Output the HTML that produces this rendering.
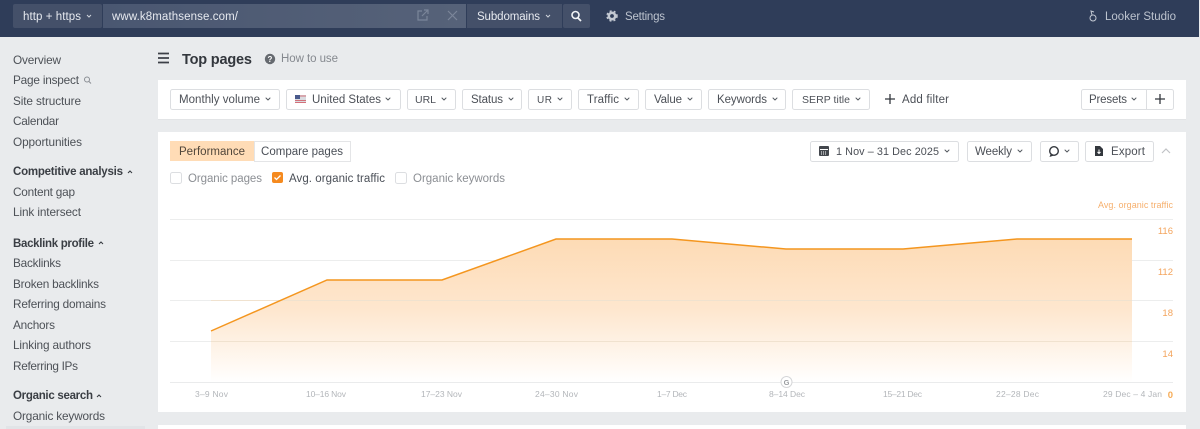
<!DOCTYPE html>
<html><head><meta charset="utf-8"><style>
html,body{margin:0;padding:0;background:#e9ebed;width:1200px;height:429px;overflow:hidden}
svg{display:block;filter:blur(.3px)}
text{font-family:"Liberation Sans",sans-serif;font-size:12px;fill:#4a4f57}
.s text{fill:#4d5157;font-size:11.8px}
.s .b{font-weight:bold;fill:#3a3e44;font-size:11.5px}
.w{fill:#e6e9ef;font-size:11.5px}
.btn{fill:#fff;stroke:#dcdee1}
.f{fill:#4c5057;font-size:11.5px}
.ch{fill:none;stroke:#555a61;stroke-width:1;stroke-linecap:round;stroke-linejoin:round}
.x{fill:#b3b6ba;font-size:8.5px}
.y{fill:#f3a45c;font-size:9.5px}
.g{stroke:#eceded;stroke-width:1}
</style></head><body>
<svg width="1200" height="429" viewBox="0 0 1200 429" xmlns="http://www.w3.org/2000/svg">
<defs>
<linearGradient id="a" gradientUnits="userSpaceOnUse" x1="0" y1="239" x2="0" y2="382"><stop offset="0" stop-color="#fddbb5"/><stop offset=".5" stop-color="#fee7cf"/><stop offset="1" stop-color="#fff" /></linearGradient>
<linearGradient id="u" x1="0" x2="1" y1="0" y2="0"><stop offset="0" stop-color="#4a5771"/><stop offset="1" stop-color="#566279"/></linearGradient>
</defs>
<rect width="1200" height="429" fill="#e9ebed"/>
<!-- header -->
<rect width="1199" height="37" fill="#2f3d59"/>
<rect x="13" y="4" width="89" height="24" rx="2" fill="#445069"/>
<rect x="103" y="4" width="363" height="24" fill="url(#u)"/>
<rect x="467" y="4" width="95" height="24" fill="#445069"/>
<rect x="563" y="4" width="27" height="24" rx="2" fill="#445069"/>
<text class="w" x="23" y="20" textLength="58">http + https</text>
<path d="M87 15l2 2 2-2" fill="none" stroke="#cfd4dc"/>
<text class="w" x="112" y="20" textLength="126">www.k8mathsense.com/</text>
<path d="M422 11h-4v9h9v-4M422 16l6-6M424 10h4v4" fill="none" stroke="#7b869a" stroke-width="1.2"/>
<path d="M448 11l9 9M457 11l-9 9" stroke="#7b869a" stroke-width="1.2"/>
<text class="w" x="477" y="20" textLength="63">Subdomains</text>
<path d="M546 15l2 2 2-2" fill="none" stroke="#cfd4dc"/>
<circle cx="575.500" cy="15" r="3.500" fill="none" stroke="#f1f3f6" stroke-width="1.600"/><path d="M578 18l3 3" stroke="#f1f3f6" stroke-width="1.800"/>
<circle cx="612" cy="16" r="3.200" fill="none" stroke="#c3c9d3" stroke-width="2.600"/><circle cx="612" cy="16" r="5" fill="none" stroke="#c3c9d3" stroke-width="1.500" stroke-dasharray="2 2.200"/>
<text x="625" y="20" textLength="40" style="fill:#bcc3ce;font-size:11.5px">Settings</text>
<circle cx="1093" cy="18" r="3" fill="none" stroke="#c3c9d3"/><path d="M1092 15l-1-4 3 1" fill="none" stroke="#c3c9d3"/>
<text x="1105" y="20" textLength="71" style="fill:#bcc3ce;font-size:11.5px">Looker Studio</text>
<!-- sidebar -->
<g class="s">
<text x="13" y="64" textLength="48">Overview</text>
<text x="13" y="84" textLength="66">Page inspect</text>
<circle cx="87" cy="79.500" r="2.500" fill="none" stroke="#8a8e94"/><path d="M89 81.500l2 2" stroke="#8a8e94"/>
<text x="13" y="105" textLength="68">Site structure</text>
<text x="13" y="125" textLength="46">Calendar</text>
<text x="13" y="146" textLength="69">Opportunities</text>
<text class="b" x="13" y="175" textLength="110">Competitive analysis</text>
<path d="M128 173l2-2 2 2" fill="none" stroke="#33373d"/>
<text x="13" y="196" textLength="62">Content gap</text>
<text x="13" y="216" textLength="68">Link intersect</text>
<text class="b" x="13" y="247" textLength="81">Backlink profile</text>
<path d="M99 244l2-2 2 2" fill="none" stroke="#33373d"/>
<text x="13" y="267" textLength="48">Backlinks</text>
<text x="13" y="288" textLength="86">Broken backlinks</text>
<text x="13" y="308" textLength="93">Referring domains</text>
<text x="13" y="329" textLength="42">Anchors</text>
<text x="13" y="349" textLength="78">Linking authors</text>
<text x="13" y="370" textLength="65">Referring IPs</text>
<text class="b" x="13" y="399" textLength="80">Organic search</text>
<path d="M97 397l2-2 2 2" fill="none" stroke="#33373d"/>
<text x="13" y="420" textLength="92">Organic keywords</text>
<rect x="6" y="426" width="139" height="3" fill="#e1e4e7"/>
</g>
<!-- title -->
<path d="M158 53.500h11M158 58h11M158 62.500h11" stroke="#3c4047" stroke-width="1.700"/>
<text x="182" y="64" textLength="70" style="font-weight:bold;font-size:14.500px;fill:#33373d">Top pages</text>
<circle cx="270" cy="59" r="5.200" fill="#666a70"/>
<text x="270" y="62" text-anchor="middle" style="fill:#fff;font-size:8px;font-weight:bold">?</text>
<text x="281" y="62" textLength="57" style="fill:#85898f;font-size:11.5px">How to use</text>
<!-- filter panel -->
<rect x="158" y="80" width="1028" height="39" fill="#fff"/>
<rect x="158" y="119" width="1028" height="1" fill="#e2e4e6"/>
<rect class="btn" x="170.500" y="89.500" width="109" height="20" rx="2"/>
<text class="f" x="179" y="103" textLength="81">Monthly volume</text>
<path class="ch" d="M266 98l2 2 2-2"/>
<rect class="btn" x="286.500" y="89.500" width="114" height="20" rx="2"/>
<rect x="295" y="95" width="11" height="8" fill="#d9dbe0"/><rect x="295" y="95" width="5" height="4" fill="#4a5a8c"/><path d="M300 96h6M295 100.500h11M295 102.500h11" stroke="#d2717a"/>
<text class="f" x="312" y="103" textLength="69">United States</text>
<path class="ch" d="M386 98l2 2 2-2"/>
<rect class="btn" x="407.500" y="89.500" width="48" height="20" rx="2"/>
<text class="f" x="415" y="103" textLength="21" style="font-size:10.500px">URL</text>
<path class="ch" d="M442 98l2 2 2-2"/>
<rect class="btn" x="462.500" y="89.500" width="59" height="20" rx="2"/>
<text class="f" x="471" y="103" textLength="32">Status</text>
<path class="ch" d="M509 98l2 2 2-2"/>
<rect class="btn" x="528.500" y="89.500" width="43" height="20" rx="2"/>
<text class="f" x="537" y="103" textLength="15" style="font-size:10px">UR</text>
<path class="ch" d="M558 98l2 2 2-2"/>
<rect class="btn" x="578.500" y="89.500" width="60" height="20" rx="2"/>
<text class="f" x="587" y="103" textLength="32">Traffic</text>
<path class="ch" d="M625 98l2 2 2-2"/>
<rect class="btn" x="645.500" y="89.500" width="56" height="20" rx="2"/>
<text class="f" x="654" y="103" textLength="28">Value</text>
<path class="ch" d="M688 98l2 2 2-2"/>
<rect class="btn" x="708.500" y="89.500" width="77" height="20" rx="2"/>
<text class="f" x="717" y="103" textLength="50">Keywords</text>
<path class="ch" d="M773 98l2 2 2-2"/>
<rect class="btn" x="792.500" y="89.500" width="77" height="20" rx="2"/>
<text class="f" x="802" y="103" textLength="48" style="font-size:10.500px">SERP title</text>
<path class="ch" d="M856 98l2 2 2-2"/>
<path d="M885 99h10M890 94v10" stroke="#33373d" stroke-width="1.300"/>
<text class="f" x="902" y="103" textLength="47">Add filter</text>
<rect class="btn" x="1081.500" y="89.500" width="92" height="20" rx="2"/>
<path d="M1146.500 90v19" stroke="#dcdee1"/>
<text class="f" x="1089" y="103" textLength="38">Presets</text>
<path class="ch" d="M1132 98l2 2 2-2"/>
<path d="M1155 99h10M1160 94v10" stroke="#33373d" stroke-width="1.300"/>
<!-- chart panel -->
<rect x="158" y="132" width="1028" height="280" fill="#fff"/>
<rect x="170" y="141" width="84" height="20" fill="#ffdcb6"/>
<rect x="254.500" y="141.500" width="96" height="20" fill="#fff" stroke="#e4e5e7"/>
<text x="179" y="155" textLength="66" style="fill:#50463a;font-size:11.5px">Performance</text>
<text x="261" y="155" textLength="82" style="font-size:11.5px">Compare pages</text>
<rect class="btn" x="170.500" y="172.500" width="11" height="11" rx="2"/>
<text x="188" y="182" textLength="74" style="fill:#8c8f94;font-size:11.5px">Organic pages</text>
<rect x="272" y="172" width="11" height="11" rx="2" fill="#f58a1f"/>
<path d="M274.500 177.500l2 2 4-4" fill="none" stroke="#fff" stroke-width="1.300"/>
<text x="289" y="182" textLength="96" style="font-size:11.5px">Avg. organic traffic</text>
<rect class="btn" x="395.500" y="172.500" width="11" height="11" rx="2"/>
<text x="413" y="182" textLength="92" style="fill:#8c8f94;font-size:11.5px">Organic keywords</text>
<rect class="btn" x="810.500" y="141.500" width="148" height="20" rx="2"/>
<rect x="819" y="146" width="10" height="10" rx="1" fill="#43474d"/><path d="M820 149.500h8" stroke="#fff"/><path d="M821 152h6M821 154h6" stroke="#fff" stroke-dasharray="1 1"/>
<text class="f" x="836" y="155" textLength="103" style="font-size:10.800px">1 Nov – 31 Dec 2025</text>
<path class="ch" d="M945 150l2 2 2-2"/>
<rect class="btn" x="967.500" y="141.500" width="64" height="20" rx="2"/>
<text class="f" x="975" y="155" textLength="37">Weekly</text>
<path class="ch" d="M1018 150l2 2 2-2"/>
<rect class="btn" x="1040.500" y="141.500" width="38" height="20" rx="2"/>
<circle cx="1054" cy="151" r="4.300" fill="none" stroke="#33373d" stroke-width="1.400"/><path d="M1051 154l-1 2.500 3-1" fill="#33373d" stroke="#33373d" stroke-width=".6"/>
<path class="ch" d="M1065 150l2 2 2-2"/>
<rect class="btn" x="1085.500" y="141.500" width="68" height="20" rx="2"/>
<path d="M1095 146h5l3 3v7h-8z" fill="#33373d"/><path d="M1099 149.500v4M1097.500 152l1.500 1.500 1.500-1.500" fill="none" stroke="#fff"/>
<text class="f" x="1111" y="155" textLength="34">Export</text>
<path d="M1162 153l4-4 4 4" fill="none" stroke="#c1c3c6" stroke-width="1.200"/>
<text x="1173" y="208" text-anchor="end" textLength="75" style="fill:#f6b06e;font-size:9px">Avg. organic traffic</text>
<!-- grid -->
<path class="g" d="M170 219.500h1003M170 260.500h1003M170 300.500h1003M170 341.500h1003"/>
<path d="M170 382.500h1003" stroke="#eaebec"/>
<path d="M211 331L327 280H442L556 239H672L786 249H903L1017 239H1132V382H211Z" fill="url(#a)"/>
<path d="M211 300.500H1132M211 341.500H1132" stroke="#f0e2cf"/>
<path d="M211 331L327 280H442L556 239H672L786 249H903L1017 239H1132" fill="none" stroke="#f4961f" stroke-width="1.500"/>
<text class="y" x="1173" y="234" text-anchor="end">116</text>
<text class="y" x="1173" y="275" text-anchor="end">112</text>
<text class="y" x="1173" y="316" text-anchor="end">18</text>
<text class="y" x="1173" y="357" text-anchor="end">14</text>
<text class="y" x="1173" y="398" text-anchor="end" style="font-weight:bold;fill:#f6ab55">0</text>
<circle cx="786.500" cy="382" r="5.500" fill="#fff" stroke="#d5d6d8"/>
<text x="786.500" y="385" text-anchor="middle" style="font-size:7.500px;font-weight:bold;fill:#9a9da1">G</text>
<text class="x" x="195" y="397" textLength="33">3–9 Nov</text>
<text class="x" x="306" y="397" textLength="40">10–16 Nov</text>
<text class="x" x="421" y="397" textLength="41">17–23 Nov</text>
<text class="x" x="535" y="397" textLength="43">24–30 Nov</text>
<text class="x" x="657" y="397" textLength="30">1–7 Dec</text>
<text class="x" x="769" y="397" textLength="36">8–14 Dec</text>
<text class="x" x="883" y="397" textLength="39">15–21 Dec</text>
<text class="x" x="996" y="397" textLength="43">22–28 Dec</text>
<text class="x" x="1103" y="397" textLength="59">29 Dec – 4 Jan</text>
<rect x="158" y="425" width="1028" height="4" fill="#fff"/>
</svg>
</body></html>
